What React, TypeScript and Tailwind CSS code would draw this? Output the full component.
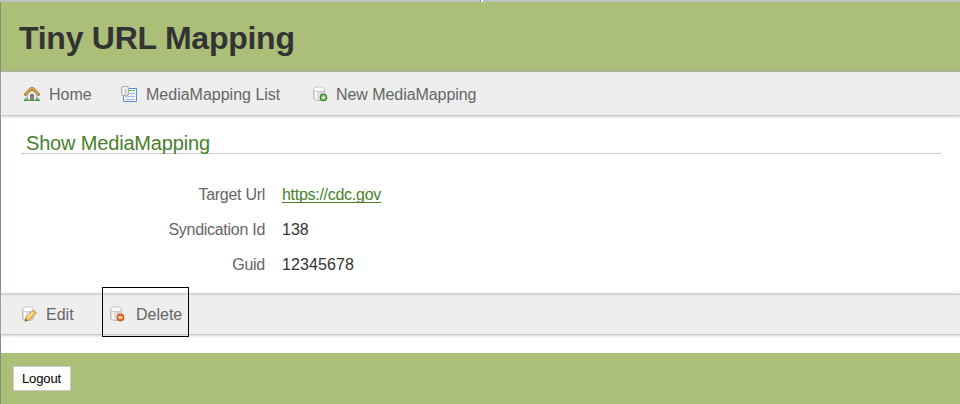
import type { ReactNode } from "react";

function Cylinder() {
  return (
    <>
      <path d="M1.500 3.500v8.500c0 1.400 2.200 2.500 5.500 2.500s5.500-1.100 5.500-2.500V3.500" fill="#e0e0e0" stroke="#bcbcbc" />
      <path d="M3 5l2 .8v7.700L3 12.500z" fill="#fafafa" />
      <path d="M8 5.800l3-.7v8L8 13.500z" fill="#cecece" />
      <ellipse cx="7" cy="3.300" rx="5.500" ry="2.500" fill="#fbfbfb" stroke="#c2c2c2" strokeWidth=".9" />
    </>
  );
}

function Icon({ className, children }: { className: string; children: ReactNode }) {
  return (
    <svg width="16" height="16" viewBox="0 0 16 16" className={`block shrink-0 ${className}`}>
      {children}
    </svg>
  );
}

function HomeIcon() {
  return (
    <Icon className="-mt-px">
      <path d="M3 8l5-5 5 5v6.500H3z" fill="#eeeeec" stroke="#888" strokeWidth=".8" />
      <path d="M6.500 8.500h3v6h-3z" fill="#888a85" stroke="#626262" strokeWidth=".8" />
      <path d="M1.500 8.300L7.200 2.600h1.600l5.700 5.700" fill="none" stroke="#a9702f" strokeWidth="3" strokeLinejoin="round" strokeLinecap="round" />
      <path d="M1.500 8L7.200 2.300h1.600L14.500 8" fill="none" stroke="#dfa457" strokeWidth="1.700" strokeLinejoin="round" strokeLinecap="round" />
      <path d="M0 15v-1.500l1.500-1.300 2 .3L5 14v1zM11 15v-1l1.500-2 2 .5L16 14v1z" fill="#3f9b45" />
      <path d="M1 13.500h2.500M12.500 13.500h2" stroke="#75cb72" />
    </Icon>
  );
}

function TableIcon() {
  return (
    <Icon className="-mt-px">
      <path d="M2.500 2.500h13v13h-13z" fill="#f5f9ff" stroke="#5c8bd0" />
      <path d="M8 4.500h6" stroke="#65b657" />
      <path d="M4 7.500h10M4 10.500h10M4 13.500h10" stroke="#95b8e8" />
      <path d="M6.500 6v9M10.500 6v9" stroke="#c9dcf5" />
      <rect x=".5" y=".5" width="7" height="9" rx="1.800" fill="#e6e6e6" stroke="#aaa" />
      <path d="M2.500 3v5" stroke="#fff" />
      <path d="M4.500 3v5" stroke="#c0c0c0" />
      <path d="M2 2h4" stroke="#fff" />
    </Icon>
  );
}

function AddIcon() {
  return (
    <Icon className="-mt-px">
      <Cylinder />
      <circle cx="11.500" cy="11.500" r="3.400" fill="#54ae3b" stroke="#2f811f" />
      <path d="M11.500 9.500v4M9.500 11.500h4" stroke="#fff" strokeWidth="1.300" />
    </Icon>
  );
}

function EditIcon() {
  return (
    <Icon className="-mt-[2px]">
      <Cylinder />
      <path d="M4 15.200l1-4 6.700-6.300q1-.8 2 .2l1 .8q.8.900 0 1.800l-6.900 6.500z" fill="#f5c957" stroke="#bd7b2c" strokeWidth=".8" />
      <path d="M6.500 11.500l6-5.700" stroke="#ffe99b" strokeWidth="1.500" />
      <path d="M4 15.200l.8-2.500 1.700 1.700z" fill="#705440" />
      <path d="M12 5l3 3" stroke="#e7a486" strokeWidth="1.300" />
    </Icon>
  );
}

function DeleteIcon() {
  return (
    <Icon className="">
      <Cylinder />
      <circle cx="11.500" cy="11.500" r="3.500" fill="#e9742d" stroke="#c65018" />
      <path d="M9.500 11.500h4" stroke="#fff" strokeWidth="1.600" />
    </Icon>
  );
}

function Item({ icon, className, children }: { icon: ReactNode; className: string; children: ReactNode }) {
  return (
    <a className={`flex items-center ${className}`}>
      {icon}
      <span className="whitespace-nowrap">{children}</span>
    </a>
  );
}

function Property({ label, children }: { label: string; children: ReactNode }) {
  return (
    <li className="flex h-[35px] items-start leading-[20px]">
      <span className="w-[264px] text-right tracking-[-0.28px] text-[#666]">{label}</span>
      <span className="ml-[17px] text-[#333]">{children}</span>
    </li>
  );
}

export default function App() {
  return (
    <div className="h-[404px] w-[960px] overflow-hidden bg-white text-[16px] text-[#666] [font-family:'Liberation_Sans',Arial,sans-serif]">
      <div className="flex h-[2px] bg-[#c0c0c0]">
        <i className="ml-[480px] w-px bg-[#3399ff]" />
        <i className="w-[2px] bg-white" />
      </div>
      <div className="h-[402px] border-l border-[#7b957b]">
        <header className="flex h-[70px] items-center bg-[#abbf78] pl-[18px] pt-[2px]">
          <h1 className="text-[32px] font-bold leading-[40px] tracking-[-0.25px] text-[#333]">Tiny URL Mapping</h1>
        </header>
        <nav className="relative flex h-[43px] items-center bg-[#eeeeee] pl-[23px] pt-[2px] shadow-[0_0_3px_1px_#aaaaaa]">
          <Item icon={<HomeIcon />} className="w-[97px] gap-[9px]">Home</Item>
          <Item icon={<TableIcon />} className="w-[191px] gap-[9px]">MediaMapping List</Item>
          <Item icon={<AddIcon />} className="gap-[8px] tracking-[-0.06px]">New MediaMapping</Item>
        </nav>
        <main className="h-[180px] px-5 pt-[16px]">
          <h2 className="mr-[-1px] h-[23px] w-[920px] border-b border-[#ccc] pl-[5px] text-[20px] leading-[24px] tracking-[-0.17px] text-[#48802c]">Show MediaMapping</h2>
          <ol className="-ml-5 mt-[31px]">
            <Property label="Target Url">
              <a className="tracking-[-0.28px] text-[#48802c] underline decoration-1 underline-offset-[2px] [text-decoration-skip-ink:none]">https://cdc.gov</a>
            </Property>
            <Property label="Syndication Id">138</Property>
            <Property label="Guid"><span className="tracking-[0.1px]">12345678</span></Property>
          </ol>
        </main>
        <nav className="relative flex h-[39px] items-start bg-[#eeeeee] pl-[20px] shadow-[0_0_3px_1px_#aaaaaa]">
          <Item icon={<EditIcon />} className="h-[40px] w-[81px] gap-[9px]">Edit</Item>
          <button className="-mt-[8px] flex h-[50px] w-[87px] shrink-0 items-center border border-black pl-[6px] pt-[4px]">
            <DeleteIcon />
            <span className="ml-[11px] mt-[2px]">Delete</span>
          </button>
        </nav>
        <footer className="mt-[19px] h-[51px] bg-[#abbf78] pl-[12px] pt-[13px]">
          <button className="block h-[25px] w-[58px] border border-[#ccc] bg-[#fcfcfc] pr-[1px] text-[13px] leading-[23px] tracking-[-0.1px] text-black">Logout</button>
        </footer>
      </div>
    </div>
  );
}
